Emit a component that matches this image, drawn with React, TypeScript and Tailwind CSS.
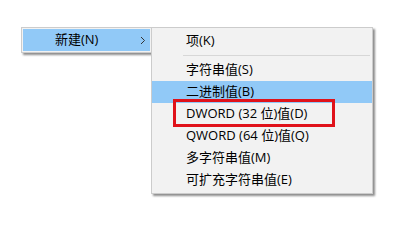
import { ReactNode } from 'react';

const font = { fontFamily: '"Open Sans", "Noto Sans CJK SC", sans-serif' };

function Item({ label, active, boxed }: { label: string; active?: boolean; boxed?: boolean }) {
  return (
    <div
      className={`relative flex h-[22px] items-center pl-[34px] text-[13px] text-black ${active ? 'bg-[#91c9f7]' : ''}`}
    >
      <span>{label}</span>
      {boxed && (
        <div className="pointer-events-none absolute left-[21px] top-[-4px] h-[28px] w-[162px] border-[3px] border-[#e0121a]" />
      )}
    </div>
  );
}

function Menu({ children, className }: { children: ReactNode; className: string }) {
  return (
    <div
      className={`border border-[#cccccc] bg-[#f2f2f2] shadow-[2px_2px_2px_rgba(0,0,0,0.45)] ${className}`}
    >
      {children}
    </div>
  );
}

export default function App() {
  return (
    <div className="h-[225px] w-[407px] overflow-hidden bg-white pl-[21px] pt-[27px]" style={font}>
      <div className="flex items-start">
        <Menu className="relative z-0 w-[131px] p-px">
          <div className="flex h-[22px] items-center justify-between bg-[#91c9f7] pl-[32px] pr-[4px] text-[13px] text-black">
            <span>新建(N)</span>
            <svg width="6" height="9" viewBox="0 0 6 9">
              <path d="M1 1l3.5 3.5L1 8" fill="none" stroke="#333" strokeWidth="1" />
            </svg>
          </div>
        </Menu>
        <Menu className="relative z-10 -ml-px w-[222px] py-[2px]">
          <Item label="项(K)" />
          <div className="py-[3px] pl-[31px] pr-[2px]">
            <div className="h-px bg-[#d7d7d7]" />
          </div>
          <Item label="字符串值(S)" />
          <Item label="二进制值(B)" active />
          <Item label="DWORD (32 位)值(D)" boxed />
          <Item label="QWORD (64 位)值(Q)" />
          <Item label="多字符串值(M)" />
          <Item label="可扩充字符串值(E)" />
        </Menu>
      </div>
    </div>
  );
}
